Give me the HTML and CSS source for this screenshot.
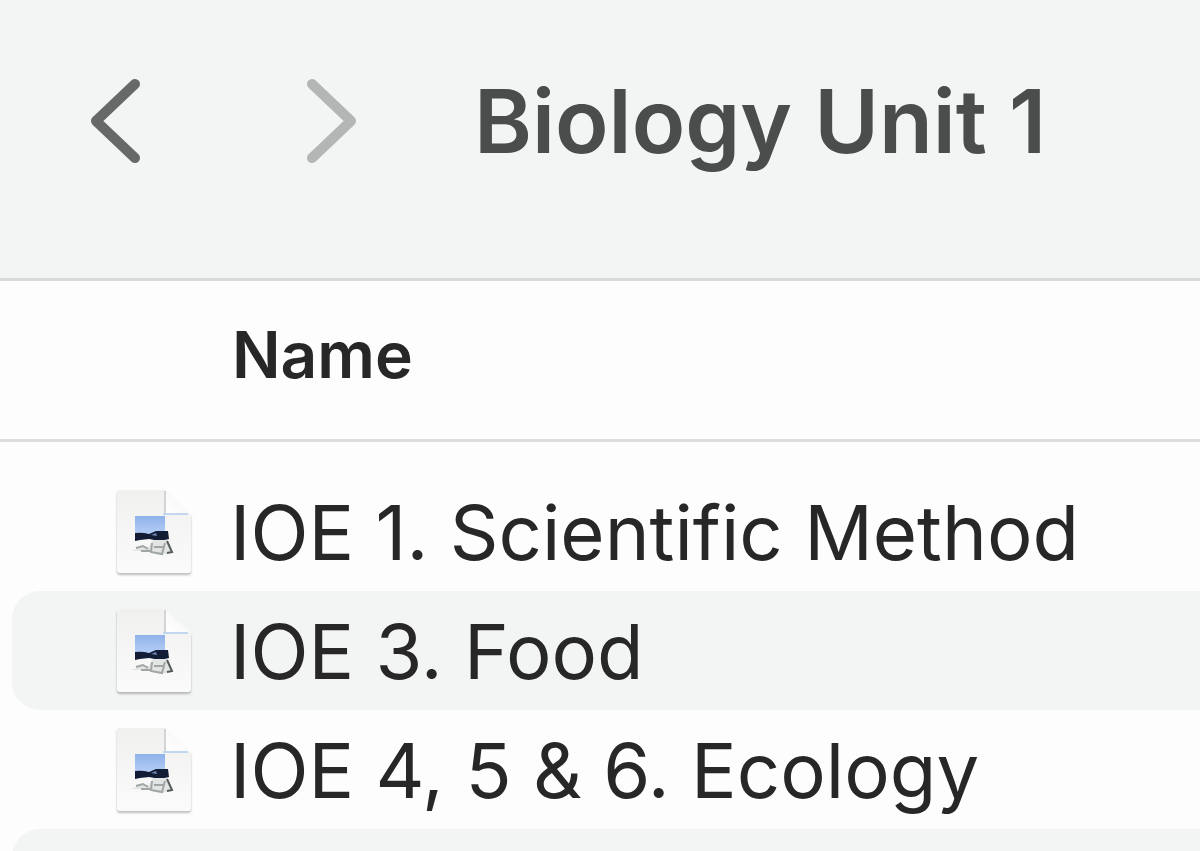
FILE: index.html
```html
<!DOCTYPE html>
<html lang="en">
<head>
<meta charset="utf-8">
<meta name="viewport" content="width=device-width, initial-scale=1">
<title>Biology Unit 1</title>
<link rel="stylesheet" href="styles.css">
</head>
<body>
<svg class="defs" width="0" height="0" aria-hidden="true">
  <defs>
    <linearGradient id="paper" x1="0" y1="0" x2="0" y2="1">
      <stop offset="0" stop-color="#f0f0ef"/>
      <stop offset="1" stop-color="#fafbfa"/>
    </linearGradient>
    <linearGradient id="sky" x1="0" y1="0" x2="0" y2="1">
      <stop offset="0" stop-color="#8fb2ea"/>
      <stop offset="1" stop-color="#b4cdf6"/>
    </linearGradient>
    <linearGradient id="fold" x1="0" y1="1" x2="1" y2="0">
      <stop offset="0" stop-color="#ffffff"/>
      <stop offset="1" stop-color="#f3f4f3"/>
    </linearGradient>
    <symbol id="document" viewBox="0 0 80 92">
      <path class="paper" d="M5 4H51L77 29V84Q77 87 74 87H6Q3 87 3 84V6Q3 4 5 4Z" fill="url(#paper)"/>
      <path d="M51 4V28H77Z" fill="url(#fold)"/>
      <path d="M51 5V28" stroke="#d2d5d4" stroke-width="2"/>
      <path d="M49 28H74" stroke="#c3d6f0" stroke-width="2"/>
      <path d="M21 30H51V48H21Z" fill="url(#sky)"/>
      <path d="M21 47Q28 46 35 48L42 45L54 45L55 53L46 55L35 53L26 54L21 55Z" fill="#131c35"/>
      <path d="M37 49L42 47L43 50Z" fill="#7186b5"/>
      <path d="M16 65Q23 64 26 60L35 61L39 54L53 54L58 66Q50 70 42 68L31 65Z" fill="#e2e5e3"/>
      <path d="M22 62L29 60L34 63M38 57L37 66L48 68L51 57M27 65L36 65M40 61L49 61" fill="none" stroke="#a0a6a3" stroke-width="2"/>
      <path d="M53 55L58 66L53 67" fill="none" stroke="#555b59" stroke-width="2"/>
    </symbol>
  </defs>
</svg>
<div class="window">
  <header class="toolbar">
    <nav class="history" aria-label="History">
      <button class="nav-button" type="button" aria-label="Back">
        <svg class="chevron" viewBox="0 0 52 86" aria-hidden="true"><path d="M45 6L6 43L45 80"/></svg>
      </button>
      <button class="nav-button nav-forward" type="button" aria-label="Forward" disabled>
        <svg class="chevron" viewBox="0 0 52 86" aria-hidden="true"><path d="M6 6L45 43L6 80"/></svg>
      </button>
    </nav>
    <h1 class="title">Biology Unit 1</h1>
  </header>
  <table class="files">
    <thead>
      <tr><th class="column-name" scope="col">Name</th></tr>
    </thead>
    <tbody>
      <tr><td class="cell"><div class="file"><svg class="file-icon" aria-hidden="true"><use href="#document"/></svg><span>IOE 1. Scientific Method</span></div></td></tr>
      <tr><td class="cell"><div class="file"><svg class="file-icon" aria-hidden="true"><use href="#document"/></svg><span>IOE 3. Food</span></div></td></tr>
      <tr><td class="cell"><div class="file"><svg class="file-icon" aria-hidden="true"><use href="#document"/></svg><span>IOE 4, 5 &amp; 6. Ecology</span></div></td></tr>
      <tr><td class="cell"><div class="file"></div></td></tr>
    </tbody>
  </table>
</div>
</body>
</html>
```
FILE: styles.css
```css
* {
  box-sizing: border-box;
}

body {
  margin: 0;
  background: #fdfdfd;
  color: #272727;
  font-family: Inter, "Liberation Sans", sans-serif;
}

.defs {
  position: absolute;
}

.window {
  height: 100vh;
  overflow: hidden;
}

.toolbar {
  display: flex;
  align-items: center;
  gap: 116px;
  padding: 66px 90px 102px;
  background: #f3f5f5;
  border-bottom: 3px solid #d9dbdb;
}

.history {
  display: flex;
  gap: 164px;
}

.nav-button {
  display: flex;
  padding: 0;
  border: 0;
  background: none;
  color: #676969;
}

.nav-forward {
  color: #b4b6b6;
}

.chevron {
  width: 52px;
  height: 86px;
  fill: none;
  stroke: currentColor;
  stroke-width: 10px;
  stroke-linecap: round;
  stroke-linejoin: round;
}

.title {
  margin: 0;
  color: #4b4d4d;
  font-size: 88px;
  font-weight: 600;
  line-height: 110px;
  white-space: nowrap;
}

.files {
  width: 100%;
  border-spacing: 0;
}

.column-name {
  padding: 34px 232px 44px;
  border-bottom: 3px solid #dcdddd;
  font-size: 64px;
  font-weight: 600;
  line-height: 80px;
  text-align: left;
}

.cell {
  padding: 0 0 0 12px;
}

tbody tr:first-child .cell {
  padding-top: 30px;
}

.file {
  display: flex;
  align-items: center;
  gap: 36px;
  min-height: 119px;
  padding-left: 102px;
  border-radius: 28px 0 0 28px;
  font-size: 76px;
  line-height: 96px;
  white-space: nowrap;
}

tbody tr:nth-child(even) .file {
  background: #f2f5f4;
}

.file-icon {
  width: 80px;
  height: 92px;
}

.paper {
  filter: drop-shadow(0 2px 1px #00000040);
}
```
